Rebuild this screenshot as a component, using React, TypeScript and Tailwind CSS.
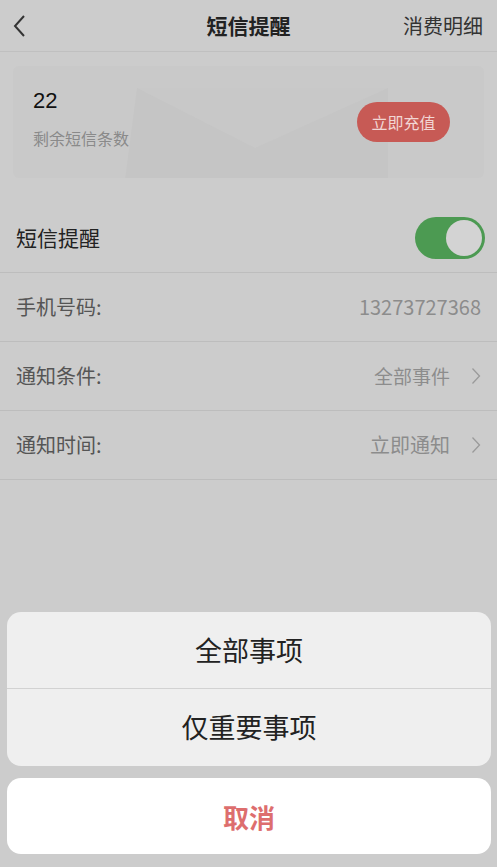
import React from 'react';

const font = { fontFamily: '"Noto Sans CJK SC", "Noto Sans", sans-serif' };

function Chevron() {
  return (
    <svg width="10" height="18" viewBox="0 0 10 18" className="ml-[21px]">
      <path d="M1.5 1.5 L8.5 9 L1.5 16.5" fill="none" stroke="#9a9a9a" strokeWidth="1.3" />
    </svg>
  );
}

function Row({ label, value, arrow, big }: { label: string; value?: string; arrow?: boolean; big?: boolean }) {
  return (
    <div className="h-[69px] flex items-center justify-between pl-4 pr-4 border-b border-[#bdbdbd]">
      <span className="text-[20px] text-[#555]">{label}</span>
      <div className="flex items-center">
        <span className={`${big ? 'text-[20px]' : 'text-[19px]'} text-[#8c8c8c]`}>{value}</span>
        {arrow && <Chevron />}
      </div>
    </div>
  );
}

export default function App() {
  return (
    <div className="relative w-[497px] h-[867px] bg-[#cccccc] overflow-hidden" style={font}>
      {/* Header */}
      <div className="h-[52px] flex items-center justify-between pl-3 pr-[14px] border-b border-[#c0c0c0]">
        <svg width="16" height="24" viewBox="0 0 16 24">
          <path d="M12 2 L3 12 L12 22" fill="none" stroke="#333" strokeWidth="2" />
        </svg>
        <span className="absolute left-0 right-0 text-center text-[21px] font-bold text-[#222] pointer-events-none">短信提醒</span>
        <span className="text-[20px] text-[#333]">消费明细</span>
      </div>

      {/* Balance card */}
      <div className="mx-[13px] mt-[14px] h-[112px] rounded-md bg-[#c9c9c9] relative overflow-hidden flex items-center justify-between pl-[20px] pr-[34px]">
        <svg className="absolute left-[112px] top-[22px]" width="275" height="92" viewBox="0 0 275 92">
          <path d="M12 0 L263 0 L263 92 L0 92 Z" fill="#c5c5c5" />
          <path d="M12 0 L130 60 L263 0 Z" fill="#c8c8c8" />
        </svg>
        <div className="relative flex flex-col">
          <span className="text-[22px] text-[#111] leading-none -mt-[4px]" style={{ fontFamily: '"Liberation Sans", sans-serif' }}>22</span>
          <span className="text-[16px] text-[#8a8a8a] mt-[14px]">剩余短信条数</span>
        </div>
        <div className="relative h-[40px] w-[93px] rounded-full bg-[#c75a55] flex items-center justify-center text-[16px] text-[#f2d6d4]">立即充值</div>
      </div>

      {/* Settings */}
      <div className="mt-[26px]">
        <div className="h-[69px] flex items-center justify-between pl-4 pr-3 border-b border-[#bdbdbd]">
          <span className="text-[21px] text-[#222]">短信提醒</span>
          <div className="w-[70px] h-[42px] rounded-full bg-[#4c9a52] flex items-center justify-end p-[3px]">
            <div className="w-[36px] h-[36px] rounded-full bg-[#d3d3d3]" />
          </div>
        </div>
        <Row label="手机号码:" value="13273727368" big />
        <Row label="通知条件:" value="全部事件" arrow />
        <Row label="通知时间:" value="立即通知" arrow big />
      </div>

      {/* Action sheet */}
      <div className="absolute left-[7px] right-[6px] bottom-[13px] flex flex-col gap-[12px]">
        <div className="rounded-[14px] bg-[#efefef] overflow-hidden">
          <div className="h-[77px] flex items-center justify-center text-[27px] text-[#222] border-b border-[#d2d2d2]">全部事项</div>
          <div className="h-[77px] flex items-center justify-center text-[27px] text-[#222]">仅重要事项</div>
        </div>
        <div className="h-[76px] rounded-[14px] bg-white flex items-center justify-center text-[26px] font-bold text-[#dd6e6e]">取消</div>
      </div>
    </div>
  );
}
